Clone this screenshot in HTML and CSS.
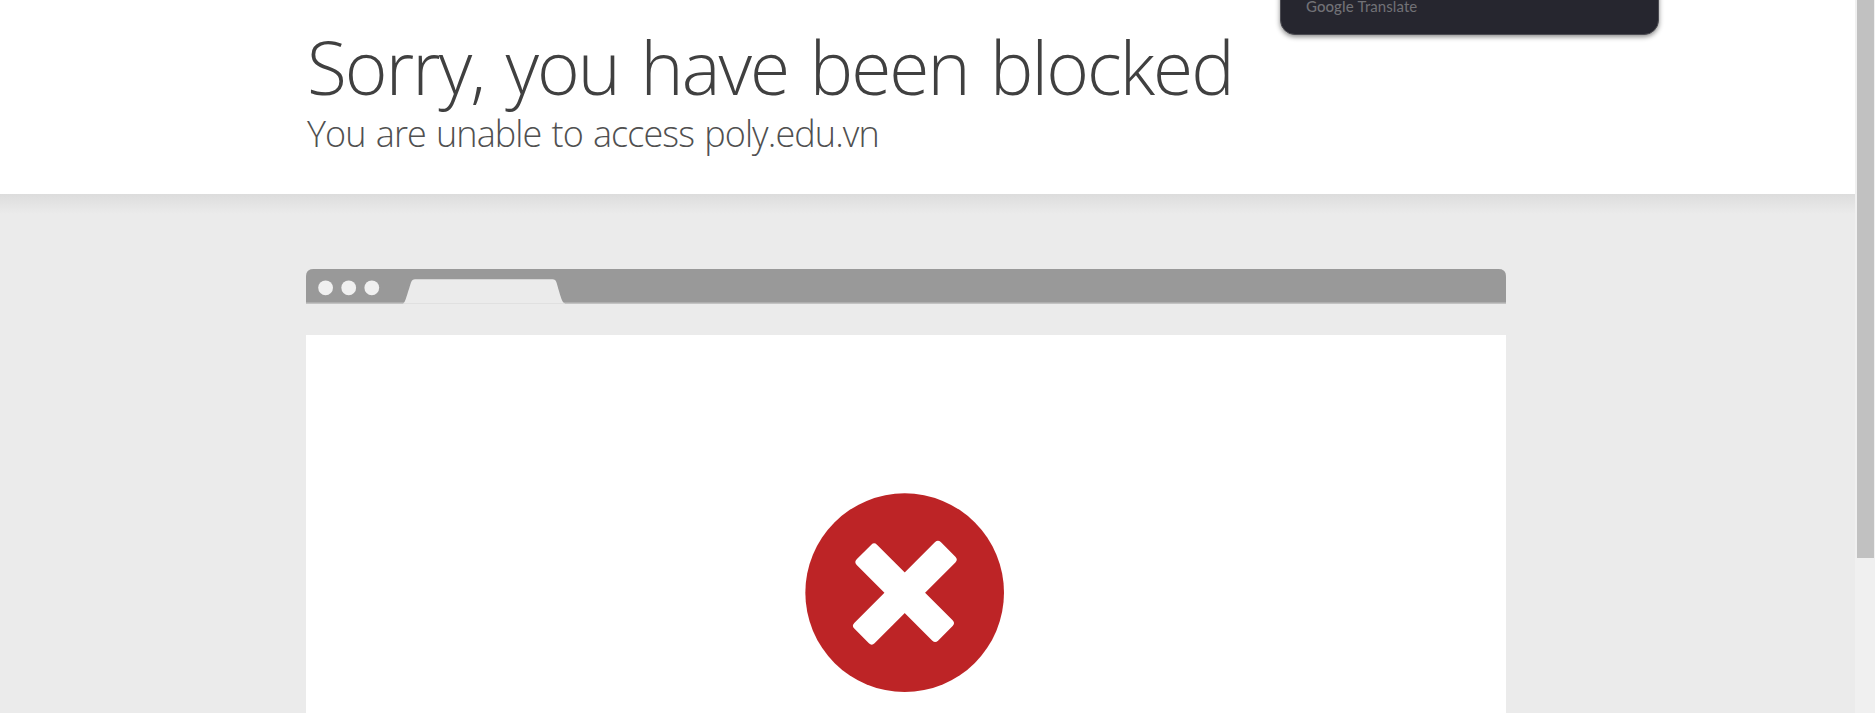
FILE: index.html
```
<!DOCTYPE html>
<html lang="en">
<head>
<meta charset="utf-8">
<title>Sorry, you have been blocked</title>
<link rel="stylesheet" href="styles.css">
</head>
<body>
<div class="viewport">
  <main class="page">
    <header class="header">
      <h1 class="title">Sorry, you have been blocked</h1>
      <h2 class="subtitle">You are unable to access poly.edu.vn</h2>
    </header>
    <section class="highlight">
      <div class="browser">
        <svg class="browser-bar" viewBox="0 0 1200 35" width="1200" height="35">
          <path d="M0 35V7.500Q0 0 7.500 0H1192.500Q1200 0 1200 7.500V35Z" fill="#c2c2c2"/>
          <path d="M0 33.500V7.500Q0 0 7.500 0H1192.500Q1200 0 1200 7.500V33.500Z" fill="#999"/>
          <path d="M97.500 34C99 33.500 99.500 31 105 13.500Q106.200 10.300 109 10.300H246.500Q249.500 10.300 250.500 13.500C255.500 31 256.500 33.500 258.500 34V35H97.500Z" fill="#ebebeb"/>
          <path d="M98 34.500H258" stroke="#e0e0e0"/>
          <g fill="#f0f0f0"><circle cx="19.600" cy="18.800" r="7.400"/><circle cx="42.700" cy="18.800" r="7.400"/><circle cx="65.800" cy="18.800" r="7.400"/></g>
        </svg>
        <div class="screen">
          <svg class="error-icon" viewBox="45 38 600 600" width="200" height="200">
            <circle cx="344" cy="337" r="298" fill="#bd2426"/>
            <g fill="#fff">
              <rect x="171.500" y="294" width="345" height="86" rx="12" transform="rotate(45 344 337)"/>
              <rect x="161" y="294" width="367" height="86" rx="12" transform="rotate(-45 344.500 337)"/>
            </g>
          </svg>
        </div>
      </div>
    </section>
  </main>
  <div class="scrollbar"><div class="thumb"></div></div>
  <aside class="translate">Google <span class="product">Translate</span></aside>
</div>
</body>
</html>
```
FILE: styles.css
```
body { margin: 0; }
.viewport {
  position: relative;
  display: flex;
  height: 713px;
  overflow: hidden;
  background: #fff;
  font-family: "Open Sans", "Noto Sans", sans-serif;
  color: #404040;
}
.page { flex: 1; min-width: 0; }
.header {
  box-sizing: border-box;
  height: 194px;
  padding: 22px 0 0 307px;
  white-space: nowrap;
}
.title, .subtitle { margin: 0; font-weight: 300; }
.title {
  font-size: 73px;
  line-height: 90px;
  letter-spacing: -1.95px;
  word-spacing: 4.5px;
}
.subtitle {
  font-size: 36px;
  line-height: 44px;
  letter-spacing: -0.9px;
  word-spacing: 1.6px;
  color: #505050;
}
.highlight {
  box-sizing: border-box;
  height: 519px;
  padding: 75px 0 0 306px;
  background: linear-gradient(#dcdcdc, #e3e3e3 9px, #ebebeb 20px) no-repeat #ebebeb;
}
.browser { width: 1200px; }
.browser-bar { display: block; }
.screen {
  display: flex;
  justify-content: center;
  box-sizing: border-box;
  height: 378px;
  margin-top: 31px;
  padding: 158px 3px 0 0;
  background: #fff;
}
.error-icon { flex: none; }
.scrollbar {
  box-sizing: border-box;
  width: 20px;
  padding: 0 1px 0 2px;
  background: #f0f0f0;
}
.thumb { height: 558px; background: #c1c1c1; }
.translate {
  position: absolute;
  top: -20px;
  left: 1280px;
  box-sizing: border-box;
  width: 379px;
  height: 55px;
  padding: 15px 0 0 25px;
  border: 1px solid #4b4b52;
  border-radius: 15px;
  background: #26262f;
  box-shadow: 0 2px 5px rgba(0, 0, 0, .45);
  color: #717176;
  font: 500 15px/20px Lato, sans-serif;
  letter-spacing: 0.08px;
}
.product { font-weight: 400; }
```
